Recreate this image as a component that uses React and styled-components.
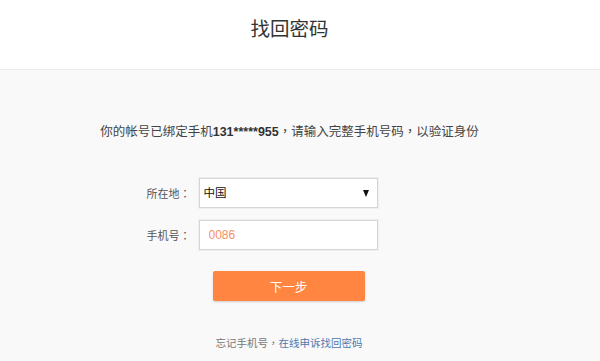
import React from 'react';
import styled, { createGlobalStyle } from 'styled-components';

const GlobalStyle = createGlobalStyle`
  html, body {
    margin: 0;
    padding: 0;
    background: #f9f9f9;
    font-family: "Liberation Sans", "Noto Sans CJK SC", sans-serif;
    color: #333;
  }
`;

// Layout

const Page = styled.div`
  width: 600px;
  height: 361px;
  overflow: hidden;
  display: flex;
  flex-direction: column;
`;

const Header = styled.header`
  height: 69px;
  background: #fff;
  border-bottom: 1px solid #ececec;
  display: flex;
  align-items: center;
  justify-content: center;
  padding-right: 21px;

  h1 {
    margin: 0;
    font-size: 19.5px;
    font-weight: normal;
    color: #333;
    line-height: 1;
    padding-bottom: 9px;
  }
`;

const Main = styled.main`
  display: flex;
  flex-direction: column;
  align-items: center;
  padding: 51px 21px 0 0;
`;

const Notice = styled.p`
  margin: 0;
  font-size: 12.5px;
  line-height: 20px;
  color: #444;

  b {
    font-weight: bold;
    color: #333;
  }
`;

const Comma = styled.span`
  font-family: "Noto Sans CJK TC", sans-serif;
`;

const Form = styled.form`
  width: 320px;
  margin-top: 36px;
  display: flex;
  flex-direction: column;
`;

const Row = styled.div`
  display: flex;
  align-items: center;
  gap: 8px;
  margin-bottom: ${p => p.$gap || 0}px;
`;

const Label = styled.label`
  width: 61px;
  text-align: right;
  font-size: 11px;
  color: #555;
`;

const Field = styled.div`
  position: relative;
  width: 179px;
  height: 30px;
  box-sizing: border-box;
  background: #fff;
  border: 1px solid #d6d6d6;
  box-shadow: 0 0 0 1px #efefef;
`;

const Select = styled.select`
  appearance: none;
  width: 100%;
  height: 100%;
  border: none;
  outline: none;
  background: transparent;
  padding: 0 0 0 4px;
  font-family: "Liberation Sans", "Noto Sans CJK SC", sans-serif;
  font-size: 11.5px;
  color: #111;
`;

const Arrow = styled.span`
  position: absolute;
  right: 8px;
  top: 11px;
  width: 0;
  height: 0;
  border-left: 3.5px solid transparent;
  border-right: 3.5px solid transparent;
  border-top: 7px solid #111;
  pointer-events: none;
`;

const Input = styled.input`
  width: 100%;
  height: 100%;
  box-sizing: border-box;
  border: none;
  outline: none;
  background: transparent;
  padding: 0 0 0 9px;
  font-family: "Liberation Sans", sans-serif;
  font-size: 12px;
  color: #f98f63;
`;

const Submit = styled.button`
  margin-left: 83px;
  width: 152px;
  height: 30px;
  border: none;
  border-radius: 2px;
  background: #ff8540;
  box-shadow: 0 1px 2px rgba(0, 0, 0, 0.18);
  color: #fff;
  font-family: "Noto Sans CJK SC", sans-serif;
  font-size: 12.5px;
  cursor: pointer;
`;

const Footer = styled.p`
  margin: 34px 0 0 86px;
  font-size: 10.5px;
  line-height: 16px;
  color: #777;

  a {
    color: #4d78ad;
    text-decoration: none;
  }
`;

export default function App() {
  return (
    <Page>
      <GlobalStyle />
      <Header>
        <h1>找回密码</h1>
      </Header>
      <Main>
        <Notice>
          你的帐号已绑定手机<b>131*****955</b><Comma>，</Comma>请输入完整手机号码<Comma>，</Comma>以验证身份
        </Notice>
        <Form onSubmit={e => e.preventDefault()}>
          <Row $gap={12}>
            <Label>所在地<Comma>：</Comma></Label>
            <Field>
              <Select defaultValue="cn">
                <option value="cn">中国</option>
              </Select>
              <Arrow />
            </Field>
          </Row>
          <Row $gap={21}>
            <Label>手机号<Comma>：</Comma></Label>
            <Field>
              <Input defaultValue="0086" />
            </Field>
          </Row>
          <Submit type="submit">下一步</Submit>
          <Footer>
            忘记手机号<Comma>，</Comma><a href="#">在线申诉找回密码</a>
          </Footer>
        </Form>
      </Main>
    </Page>
  );
}
